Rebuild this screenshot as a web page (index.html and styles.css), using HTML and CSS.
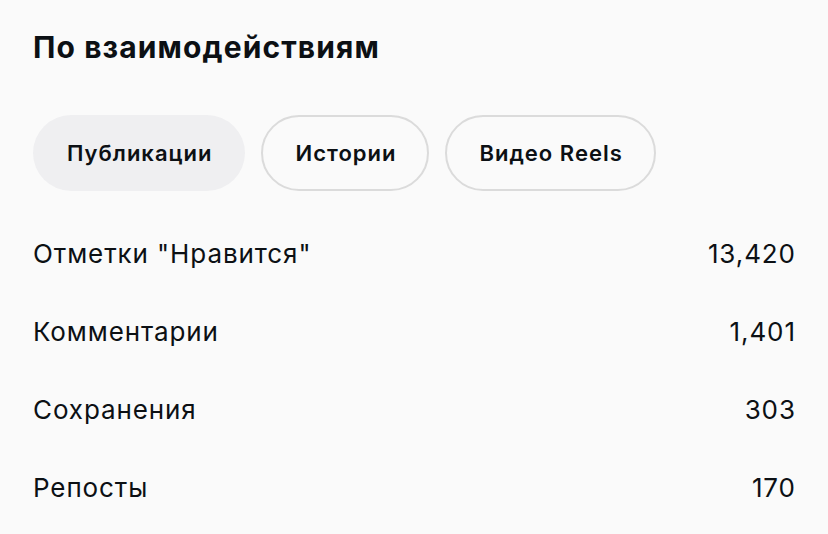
FILE: index.html
```html
<!DOCTYPE html>
<html lang="ru">
<head>
<meta charset="utf-8">
<link rel="stylesheet" href="styles.css">
</head>
<body>
<div class="panel">
  <h2 class="title">По взаимодействиям</h2>
  <div class="tabs">
    <button class="tab active">Публикации</button>
    <button class="tab">Истории</button>
    <button class="tab">Видео Reels</button>
  </div>
  <ul class="stats">
    <li class="row"><span>Отметки "Нравится"</span><span>13,420</span></li>
    <li class="row"><span>Комментарии</span><span>1,401</span></li>
    <li class="row"><span>Сохранения</span><span>303</span></li>
    <li class="row"><span>Репосты</span><span>170</span></li>
  </ul>
</div>
</body>
</html>
```

FILE: styles.css
```css
html, body {
  margin: 0;
  padding: 0;
  background: #fafafa;
}
body {
  font-family: Inter, "Noto Sans", sans-serif;
  color: #0c1014;
}
.panel {
  padding: 27px 33px 0 33px;
}
.title {
  margin: 0;
  font-size: 30px;
  font-weight: 700;
  line-height: 40px;
  letter-spacing: 1.1px;
}
.tabs {
  display: flex;
  gap: 16px;
  margin-top: 48px;
}
.tab {
  font-family: inherit;
  font-size: 22px;
  font-weight: 600;
  letter-spacing: 1px;
  color: #0c1014;
  height: 76px;
  padding: 0 31px 0 32px;
  border-radius: 38px;
  border: 2px solid #dbdbdb;
  background: transparent;
}
.tab.active {
  background: #efeff1;
  border-color: transparent;
}
.stats {
  list-style: none;
  margin: 23px 0 0;
  padding: 0;
}
.row {
  display: flex;
  justify-content: space-between;
  align-items: center;
  height: 78px;
  font-size: 26px;
  font-weight: 400;
  letter-spacing: 0.9px;
}
.row span:last-child {
  margin-right: -0.9px;
}
```
